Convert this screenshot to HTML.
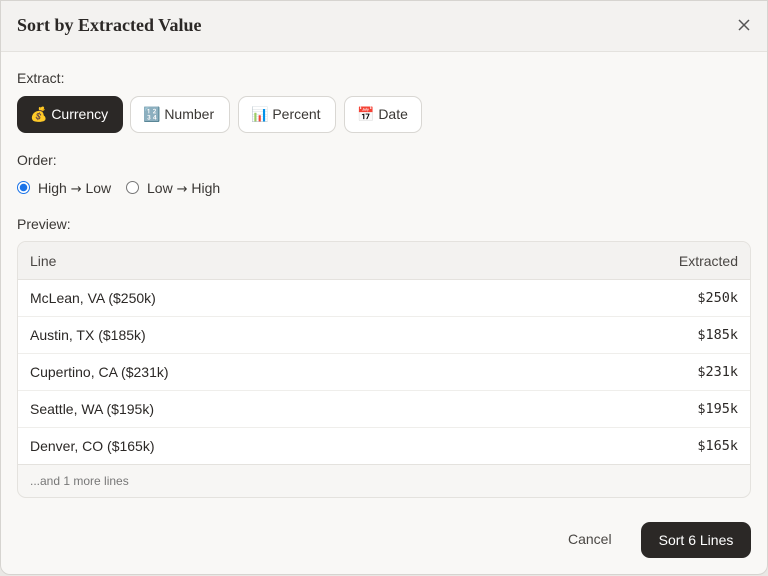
<!DOCTYPE html>
<html><head><style>
*{box-sizing:border-box;margin:0;padding:0}
body{width:768px;height:576px;background:#e9e8e5;font-family:"Liberation Sans","Noto Sans CJK SC",sans-serif;color:#2b2826;overflow:hidden}
.dlg{position:absolute;left:0;top:0;width:768px;height:575px;background:#f9f8f6;border-radius:0 0 10px 10px;overflow:hidden}
.frame{position:absolute;left:0;top:0;width:768px;height:575px;border:1px solid #d6d4d0;border-radius:0 0 10px 10px;pointer-events:none}
.hd{height:52px;background:#f3f2f0;border-bottom:1px solid #e4e2de;position:relative}
.hd h1{position:absolute;left:17px;top:15px;font-family:"Liberation Serif",serif;font-size:18px;font-weight:bold;color:#2b2826}
.x{position:absolute;left:737px;top:18px}
.lbl{position:absolute;left:17px;font-size:14px;color:#3a3734}
.ar{font-family:"DejaVu Sans",sans-serif;font-size:13px}
.btn{position:absolute;top:96px;height:37px;border:1px solid #d9d7d3;border-radius:9px;background:#fff;font-size:14px;line-height:35px;padding-left:12px;color:#3a3734}
.btn.on{background:#2b2826;color:#fff;border-color:#2b2826}
.rad{position:absolute;top:181px;width:13px;height:13px;border-radius:50%;border:1px solid #777;background:#fff}
.rad.on{border:1px solid #1a73e8;background:radial-gradient(circle,#1a73e8 0 3.5px,#fff 4px)}
.tbl{position:absolute;left:17px;top:241px;width:734px;height:257px;border:1px solid #e4e2de;border-radius:9px;background:#f7f6f4;overflow:hidden}
.row{position:absolute;left:0;width:732px;height:37px;background:#fff;border-bottom:1px solid #efeeeb;font-size:14px;line-height:37px}
.row .l{position:absolute;left:12px}
.row .r{position:absolute;right:12px;font-family:"DejaVu Sans Mono",monospace;font-size:13.5px}
.th{position:absolute;top:0;left:0;width:732px;height:38px;background:#f3f2f0;border-bottom:1px solid #e4e2de;font-size:14px;line-height:38px;color:#4a4744}
</style></head><body>
<div class="dlg">
<div class="hd"><h1>Sort by Extracted Value</h1>
<svg class="x" width="14" height="14" viewBox="0 0 14 14"><path d="M2 2L12 12M12 2L2 12" stroke="#555" stroke-width="1.5"/></svg></div>
<div class="lbl" style="top:70px">Extract:</div>
<div class="btn on" style="left:17px;width:106px">💰 Currency</div>
<div class="btn" style="left:130px;width:100px">🔢 Number</div>
<div class="btn" style="left:238px;width:98px">📊 Percent</div>
<div class="btn" style="left:344px;width:78px">📅 Date</div>
<div class="lbl" style="top:152px">Order:</div>
<div class="rad on" style="left:17px"></div><div class="lbl" style="left:38px;top:180px">High <span class="ar">→</span> Low</div>
<div class="rad" style="left:126px"></div><div class="lbl" style="left:147px;top:180px">Low <span class="ar">→</span> High</div>
<div class="lbl" style="top:216px">Preview:</div>
<div class="tbl">
<div class="th"><span style="position:absolute;left:12px">Line</span><span style="position:absolute;right:12px">Extracted</span></div>
<div class="row" style="top:38px"><span class="l">McLean, VA ($250k)</span><span class="r">$250k</span></div>
<div class="row" style="top:75px"><span class="l">Austin, TX ($185k)</span><span class="r">$185k</span></div>
<div class="row" style="top:112px"><span class="l">Cupertino, CA ($231k)</span><span class="r">$231k</span></div>
<div class="row" style="top:149px"><span class="l">Seattle, WA ($195k)</span><span class="r">$195k</span></div>
<div class="row" style="top:186px;border-bottom:1px solid #e4e2de"><span class="l">Denver, CO ($165k)</span><span class="r">$165k</span></div>
<div style="position:absolute;left:12px;top:232px;font-size:12px;color:#777">...and 1 more lines</div>
</div>
<div style="position:absolute;left:568px;top:531px;font-size:14px;color:#4a4744">Cancel</div>
<div style="position:absolute;left:641px;top:522px;width:110px;height:36px;background:#2b2826;border-radius:9px;color:#fff;font-size:14px;line-height:36px;text-align:center">Sort 6 Lines</div>
</div>
<div class="frame"></div>
</body></html>
